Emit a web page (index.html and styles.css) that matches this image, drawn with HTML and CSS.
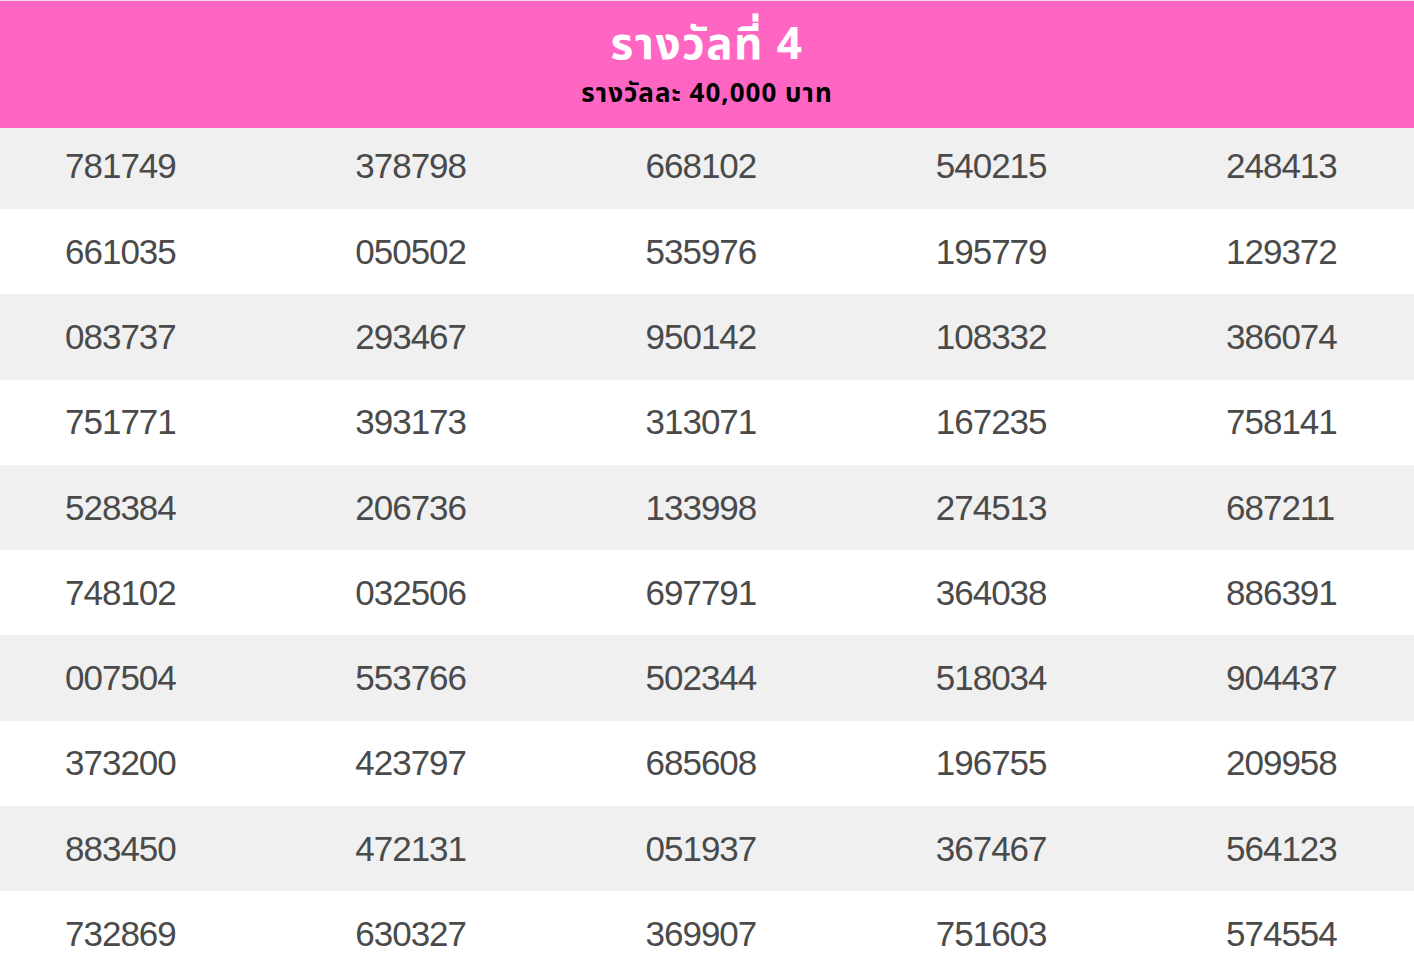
FILE: index.html
```html
<!DOCTYPE html>
<html lang="th">
<head>
<meta charset="utf-8">
<link rel="stylesheet" href="styles.css">
</head>
<body>
<div class="page">
  <header class="head">
    <div class="title">รางวัลที่ 4</div>
    <div class="sub">รางวัลละ 40,000 บาท</div>
  </header>
  <div class="table">
    <div class="row"><span>781749</span><span>378798</span><span>668102</span><span>540215</span><span>248413</span></div>
    <div class="row"><span>661035</span><span>050502</span><span>535976</span><span>195779</span><span>129372</span></div>
    <div class="row"><span>083737</span><span>293467</span><span>950142</span><span>108332</span><span>386074</span></div>
    <div class="row"><span>751771</span><span>393173</span><span>313071</span><span>167235</span><span>758141</span></div>
    <div class="row"><span>528384</span><span>206736</span><span>133998</span><span>274513</span><span>687211</span></div>
    <div class="row"><span>748102</span><span>032506</span><span>697791</span><span>364038</span><span>886391</span></div>
    <div class="row"><span>007504</span><span>553766</span><span>502344</span><span>518034</span><span>904437</span></div>
    <div class="row"><span>373200</span><span>423797</span><span>685608</span><span>196755</span><span>209958</span></div>
    <div class="row"><span>883450</span><span>472131</span><span>051937</span><span>367467</span><span>564123</span></div>
    <div class="row"><span>732869</span><span>630327</span><span>369907</span><span>751603</span><span>574554</span></div>
  </div>
</div>
</body>
</html>
```
FILE: styles.css
```css
html, body {
  margin: 0;
  padding: 0;
  background: #ffffff;
  overflow: hidden;
}
.page {
  width: 1414px;
  overflow: hidden;
}
.head {
  height: 127px;
  border-top: 1px solid #f3d9e9;
  background: #ff66c4;
  display: flex;
  flex-direction: column;
  align-items: center;
  font-family: "Noto Sans", "Noto Sans Thai", "DejaVu Sans", sans-serif;
  font-weight: 700;
}
.title {
  color: #ffffff;
  font-size: 44px;
  line-height: 46px;
  letter-spacing: 1.5px;
  margin-top: 18px;
}
.sub {
  color: #000000;
  font-size: 26px;
  line-height: 30px;
  letter-spacing: 1px;
  margin-top: 12px;
}
.table {
  display: flex;
  flex-direction: column;
}
.row {
  display: grid;
  grid-template-columns: repeat(5, 290.25px);
  padding-left: 65px;
  height: 85.3px;
  align-items: center;
  font-family: "Liberation Sans", Arial, sans-serif;
  font-size: 35px;
  letter-spacing: -1px;
  color: #4a4a4a;
  white-space: nowrap;
}
.row:nth-child(odd) {
  background: #f0f0f0;
}
.row:first-child {
  height: 81px;
  padding-bottom: 5px;
  box-sizing: border-box;
}
```
